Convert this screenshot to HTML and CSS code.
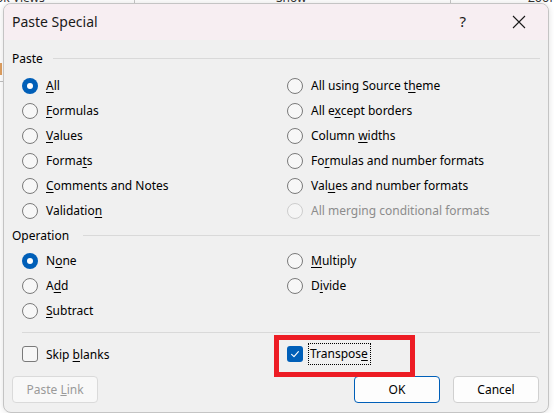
FILE: index.html
```html
<!DOCTYPE html>
<html>
<head>
<meta charset="utf-8">
<link rel="stylesheet" href="styles.css">
</head>
<body>
<div class="desk">
  <div class="ribbon">
    <span class="rb rb1">ok Views</span>
    <span class="rb rb2">Show</span>
    <span class="rb rb3">Zoom</span>
  </div>
  <div class="edge-left"><span class="mark"></span></div>
</div>

<div class="dialog">
  <div class="titlebar">
    <span class="title">Paste Special</span>
    <span class="help">?</span>
    <svg class="close" width="14" height="14" viewBox="0 0 14 14"><path d="M1 1 L13 13 M13 1 L1 13" stroke="#1a1a1a" stroke-width="1.1" fill="none"/></svg>
  </div>
  <div class="body">
    <div class="group-head head-paste"><span>Paste</span><i class="line"></i></div>
    <div class="options">
      <label class="opt"><span class="radio on"></span><span><u>A</u>ll</span></label>
      <label class="opt"><span class="radio"></span><span>All using Source t<u>h</u>eme</span></label>
      <label class="opt"><span class="radio"></span><span><u>F</u>ormulas</span></label>
      <label class="opt"><span class="radio"></span><span>All e<u>x</u>cept borders</span></label>
      <label class="opt"><span class="radio"></span><span><u>V</u>alues</span></label>
      <label class="opt"><span class="radio"></span><span>Column <u>w</u>idths</span></label>
      <label class="opt"><span class="radio"></span><span>Forma<u>t</u>s</span></label>
      <label class="opt"><span class="radio"></span><span>Fo<u>r</u>mulas and number formats</span></label>
      <label class="opt"><span class="radio"></span><span><u>C</u>omments and Notes</span></label>
      <label class="opt"><span class="radio"></span><span>Val<u>u</u>es and number formats</span></label>
      <label class="opt"><span class="radio"></span><span>Validatio<u>n</u></span></label>
      <label class="opt disabled"><span class="radio"></span><span>All merging conditional formats</span></label>
    </div>
    <div class="group-head head-op"><span>Operation</span><i class="line"></i></div>
    <div class="options ops">
      <label class="opt"><span class="radio on"></span><span>N<u>o</u>ne</span></label>
      <label class="opt"><span class="radio"></span><span><u>M</u>ultiply</span></label>
      <label class="opt"><span class="radio"></span><span>A<u>d</u>d</span></label>
      <label class="opt"><span class="radio"></span><span>D<u>i</u>vide</span></label>
      <label class="opt"><span class="radio"></span><span><u>S</u>ubtract</span></label>
    </div>
    <div class="sep"></div>
    <div class="options checks">
      <label class="opt"><span class="check"></span><span>Skip <u>b</u>lanks</span></label>
      <label class="opt"><span class="check on"><svg width="16" height="16" viewBox="0 0 16 16"><path d="M4.6 8.3 L7 10.6 L11.4 5.6" stroke="#fff" stroke-width="1.1" fill="none" stroke-linecap="round" stroke-linejoin="round"/></svg></span><span class="focus">Transpos<u>e</u></span></label>
    </div>
    <div class="buttons">
      <button class="btn disabled">Paste <u>L</u>ink</button>
      <span class="spacer"></span>
      <button class="btn default">OK</button>
      <button class="btn">Cancel</button>
    </div>
  </div>
  <div class="highlight"></div>
</div>
</body>
</html>
```

FILE: styles.css
```css
html, body {
  margin: 0;
  padding: 0;
}
body {
  width: 554px;
  height: 413px;
  overflow: hidden;
  background: #ffffff;
  font-family: "Noto Sans", "Open Sans", sans-serif;
  font-size: 12px;
  color: #000;
  position: relative;
}
.desk {
  height: 413px;
  position: relative;
}
.ribbon {
  height: 3px;
  overflow: hidden;
  position: relative;
}
.rb {
  position: absolute;
  top: -11px;
  font-size: 12px;
  color: #333;
}
.rb1 { left: -4px; }
.rb2 { left: 276px; }
.rb3 { left: 528px; }
.ribbon::before, .ribbon::after {
  content: "";
  position: absolute;
  top: 0;
  width: 1px;
  height: 3px;
  background: #c8c8c8;
}
.ribbon::before { left: 134px; }
.ribbon::after { left: 450px; }
.edge-left {
  position: absolute;
  left: 0;
  top: 63px;
  width: 3px;
}
.mark {
  display: block;
  width: 2px;
  height: 12px;
  background: #e0a060;
}
.edge-left::after {
  content: "";
  display: block;
  margin-top: 6px;
  width: 3px;
  height: 1px;
  background: #c0c0c0;
}

.dialog {
  position: absolute;
  left: 3px;
  top: 3px;
  width: 546px;
  height: 410px;
  box-sizing: border-box;
  border: 1px solid #c4c4c4;
  border-radius: 8px;
  background: #f0f0f0;
  overflow: hidden;
  box-shadow: 0 0 6px rgba(0,0,0,0.12);
}
.titlebar {
  height: 36px;
  background: #f7eef2;
  display: flex;
  align-items: center;
  padding-left: 8px;
  padding-right: 22px;
}
.title {
  font-size: 14px;
  flex: 1;
  color: #1a1a1a;
  position: relative;
  top: -1px;
}
.help {
  font-size: 15px;
  color: #1a1a1a;
  margin-right: 46px;
  position: relative;
  top: -1px;
}
.close {
  display: block;
}
.body {
  padding: 0 8px 0 8px;
}
.group-head {
  display: flex;
  align-items: center;
  height: 16px;
}
.head-paste { margin-top: 10px; }
.head-op { margin-top: 4px; }
.group-head .line {
  flex: 1;
  height: 1px;
  background: #d9d9d9;
  margin-left: 10px;
}
.head-op .line { margin-left: 14px; }
.options {
  display: grid;
  grid-template-columns: 265px 1fr;
  grid-auto-rows: 25px;
  padding-left: 10px;
  margin-top: 7px;
}
.ops { margin-top: 5px; }
.opt {
  display: flex;
  align-items: center;
  gap: 8px;
  white-space: nowrap;
}
.opt u {
  text-decoration-thickness: 1px;
  text-underline-offset: 2px;
}
.radio {
  width: 16px;
  height: 16px;
  box-sizing: border-box;
  border-radius: 50%;
  border: 1px solid #7a7a7a;
  background: #f7f7f7;
  flex: none;
  position: relative;
}
.radio.on {
  border: none;
  background: #005fb8;
}
.radio.on::after {
  content: "";
  position: absolute;
  left: 5px;
  top: 5px;
  width: 6px;
  height: 6px;
  border-radius: 50%;
  background: #fff;
}
.disabled {
  color: #8c8c8c;
}
.opt.disabled .radio {
  border-color: #cdcdcd;
  background: #f5f5f5;
}
.sep {
  height: 1px;
  background: #d9d9d9;
  margin: 9px 0 0 10px;
}
.checks {
  margin-top: 11px;
  grid-auto-rows: 20px;
}
.check {
  width: 16px;
  height: 16px;
  box-sizing: border-box;
  border-radius: 3px;
  border: 1px solid #7a7a7a;
  background: #f7f7f7;
  flex: none;
}
.check.on {
  border: none;
  background: #005fb8;
}
.check svg { display: block; }
.focus {
  outline: 1px dotted #000;
  outline-offset: 0;
  padding: 1px 2px 2px 1px;
  margin-left: -2px;
}
.buttons {
  display: flex;
  margin-top: 12px;
  gap: 13px;
  padding-right: 1px;
}
.spacer { flex: 1; }
.btn {
  width: 86px;
  height: 27px;
  box-sizing: border-box;
  border: 1px solid #d0d0d0;
  border-radius: 4px;
  background: #fdfdfd;
  font-family: "Noto Sans", "Open Sans", sans-serif;
  font-size: 12px;
  color: #000;
  padding: 0;
}
.btn.disabled {
  color: #9a9a9a;
  border-color: #dadada;
  background: #f8f8f8;
}
.btn.default {
  border-color: #005fb8;
}
.highlight {
  position: absolute;
  left: 270px;
  top: 331px;
  width: 141px;
  height: 42px;
  box-sizing: border-box;
  border: 5px solid #ed1c24;
}
```
